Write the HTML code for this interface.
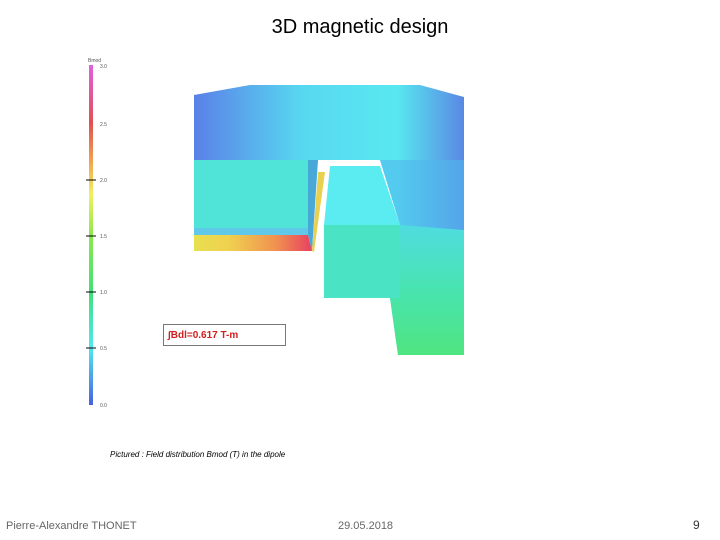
<!DOCTYPE html>
<html><head><meta charset="utf-8"><style>
body{margin:0;width:720px;height:540px;background:#fff;position:relative;overflow:hidden;font-family:"Liberation Sans",sans-serif}
.t{position:absolute;white-space:nowrap}
</style></head><body>
<div class="t" style="left:0;width:720px;top:16px;text-align:center;font-size:20px;color:#000">3D magnetic design</div>
<svg width="720" height="540" style="position:absolute;left:0;top:0">
<defs>
<linearGradient id="cb" x1="0" y1="1" x2="0" y2="0">
<stop offset="0" stop-color="#4a5fe0"/><stop offset="0.17" stop-color="#4fe8f0"/><stop offset="0.33" stop-color="#3fe07a"/><stop offset="0.5" stop-color="#8ee84a"/><stop offset="0.62" stop-color="#f0f060"/><stop offset="0.72" stop-color="#f0a050"/><stop offset="0.83" stop-color="#e05050"/><stop offset="1" stop-color="#e060e0"/></linearGradient>
<linearGradient id="top" x1="0" y1="0" x2="1" y2="0"><stop offset="0" stop-color="#5a80e8"/><stop offset="0.4" stop-color="#58d8f0"/><stop offset="0.75" stop-color="#58e8f0"/><stop offset="1" stop-color="#5a88e4"/></linearGradient>
<linearGradient id="red" x1="0" y1="0" x2="1" y2="0"><stop offset="0" stop-color="#e8e050"/><stop offset="0.3" stop-color="#f0d050"/><stop offset="0.7" stop-color="#f09050"/><stop offset="1" stop-color="#e84060"/></linearGradient>
<linearGradient id="leg" x1="0" y1="0" x2="0" y2="1"><stop offset="0" stop-color="#50dce0"/><stop offset="0.5" stop-color="#48e4b0"/><stop offset="1" stop-color="#50e480"/></linearGradient>
</defs>
<rect x="89" y="65" width="4" height="340" fill="url(#cb)"/>
<g stroke="#000" stroke-width="1"><line x1="86" y1="180" x2="96" y2="180"/><line x1="86" y1="236" x2="96" y2="236"/><line x1="86" y1="292" x2="96" y2="292"/><line x1="86" y1="348" x2="96" y2="348"/></g>
<g font-size="5" fill="#555" font-family="Liberation Sans"><text x="88" y="62">Bmod</text><text x="100" y="68">3.0</text><text x="100" y="126">2.5</text><text x="100" y="182">2.0</text><text x="100" y="238">1.5</text><text x="100" y="294">1.0</text><text x="100" y="350">0.5</text><text x="100" y="407">0.0</text></g>
<polygon points="194,95 250,85 420,85 464,97 464,355 398,355 390,298 400,298 400,225 380,160 318,160 318,162 194,162" fill="url(#top)"/>
<polygon points="380,160 400,225 464,235 464,160" fill="#50b8ec" opacity="0.6"/>
<polygon points="400,225 464,230 464,355 398,355 390,298 400,298" fill="url(#leg)"/>
<rect x="194" y="160" width="114" height="75" fill="#50e4d8"/>
<rect x="194" y="228" width="114" height="8" fill="#60c8e8"/>
<polygon points="194,235 308,235 312,251 194,251" fill="url(#red)"/>
<polygon points="308,160 318,160 312,251 308,235" fill="#48a8d8"/>
<polygon points="318,172 325,172 314,252 312,251" fill="#e8d050"/>
<polygon points="330,166 380,166 400,225 324,225" fill="#5aecf0"/>
<rect x="324" y="225" width="76" height="73" fill="#4ae4c4"/>
<rect x="163.5" y="324.5" width="122" height="21" fill="#fff" stroke="#777"/>
<text x="168" y="338" font-size="10" font-weight="bold" fill="#d02020" font-family="Liberation Sans">∫Bdl=0.617 T-m</text>
</svg>
<div class="t" style="left:110px;top:450px;font-size:8px;font-style:italic;color:#000">Pictured : Field distribution Bmod (T) in the dipole</div>
<div class="t" style="left:6px;top:520px;font-size:11px;color:#666">Pierre-Alexandre THONET</div>
<div class="t" style="left:338px;top:520px;font-size:11px;color:#666">29.05.2018</div>
<div class="t" style="left:693px;top:518px;font-size:12px;color:#333">9</div>
</body></html>
